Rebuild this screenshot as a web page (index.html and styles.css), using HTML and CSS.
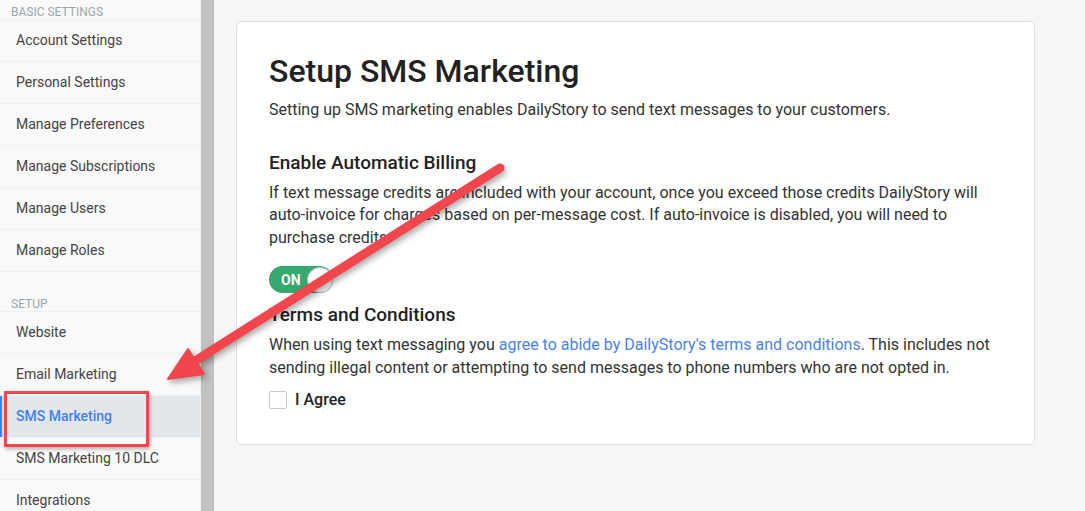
FILE: index.html
```html
<!DOCTYPE html>
<html lang="en">
<head>
<meta charset="utf-8"/>
<meta content="width=device-width, initial-scale=1.0" name="viewport"/>
<title>SMS Marketing</title>
<link rel="stylesheet" href="styles.css">
</head>
<body>
<div class="layout">
  <aside class="sidebar">
    <div class="nav-group">
      <div class="nav-header">Basic Settings</div>
      <a class="nav-item" href="#">Account Settings</a>
      <a class="nav-item" href="#">Personal Settings</a>
      <a class="nav-item" href="#">Manage Preferences</a>
      <a class="nav-item" href="#">Manage Subscriptions</a>
      <a class="nav-item" href="#">Manage Users</a>
      <a class="nav-item" href="#">Manage Roles</a>
    </div>
    <div class="nav-group">
      <div class="nav-header">Setup</div>
      <a class="nav-item" href="#">Website</a>
      <a class="nav-item" href="#">Email Marketing</a>
      <a class="nav-item active" href="#">SMS Marketing<span class="callout-box"></span></a>
      <a class="nav-item" href="#">SMS Marketing 10 DLC</a>
      <a class="nav-item" href="#">Integrations</a>
    </div>
  </aside>
  <div class="scrollbar"><div class="scrollbar-thumb"></div></div>
  <main class="content">
    <section class="card">
      <h1>Setup SMS Marketing</h1>
      <p class="lead">Setting up SMS marketing enables DailyStory to send text messages to your customers.</p>

      <h3>Enable Automatic Billing</h3>
      <p>If text message credits are included with your account, once you exceed those credits DailyStory will auto-invoice for charges based on per-message cost. If auto-invoice is disabled, you will need to purchase credits.</p>
      <div class="toggle">
        <span class="toggle-label">ON</span>
        <span class="toggle-knob"></span>
      </div>

      <h3 class="terms-title">Terms and Conditions</h3>
      <p>When using text messaging you <a href="#">agree to abide by DailyStory's terms and conditions</a>. This includes not sending illegal content or attempting to send messages to phone numbers who are not opted in.</p>
      <label class="agree">
        <span class="checkbox"></span>
        I Agree
      </label>
    </section>
  </main>
</div>

<!-- annotation arrow -->
<svg class="callout-arrow" width="1085" height="511" viewBox="0 0 1085 511">
  <g fill="#f2464d" stroke="#f2464d">
    <line x1="500" y1="168" x2="192" y2="363" stroke-width="9" stroke-linecap="round"/>
    <polygon points="168,379 188,349 204,374" stroke-width="2" stroke-linejoin="round"/>
  </g>
</svg>
</body>
</html>
```

FILE: styles.css
```css
body {
  margin: 0;
  font-family: 'Roboto', 'Liberation Sans', sans-serif;
  background: #f6f6f6;
  color: #333;
  overflow: hidden;
}

.layout {
  display: flex;
  height: 511px;
}

.sidebar {
  width: 200px;
  flex-shrink: 0;
  background: #f9f9f9;
  margin-top: -21px;
}

.nav-header {
  height: 41px;
  box-sizing: border-box;
  display: flex;
  align-items: flex-end;
  padding: 0 0 0 11px;
  line-height: 13px;
  font-size: 12px;
  text-transform: uppercase;
  color: #9ba5ad;
  border-bottom: 1px solid #edf1f5;
}

.nav-group + .nav-group .nav-header {
  height: 40px;
}

.nav-item {
  position: relative;
  display: block;
  height: 41px;
  line-height: 41px;
  padding-left: 16px;
  font-size: 14px;
  color: #444;
  text-decoration: none;
  border-bottom: 1px solid #edf1f5;
}

.nav-item.active {
  background: #e4e7ea;
  color: #3b82f0;
  font-weight: 500;
  box-shadow: inset 2px 0 0 #3b82f0;
}

.callout-box {
  position: absolute;
  left: 4px;
  top: -5px;
  width: 145px;
  height: 56px;
  box-sizing: border-box;
  border: 3px solid #f2464d;
  box-shadow: 1px 2px 4px rgba(0,0,0,0.3);
}

.scrollbar {
  width: 14px;
  flex-shrink: 0;
  background: #f1f1f1;
  display: flex;
}

.scrollbar-thumb {
  margin-left: 1px;
  flex: 1;
  background: #c1c1c1;
}

.content {
  flex: 1;
  padding: 21px 0 0 22px;
}

.card {
  width: 799px;
  box-sizing: border-box;
  background: white;
  border: 1px solid #dedede;
  border-radius: 6px;
  padding: 29px 32px 33px;
}

h1 {
  margin: 0;
  font-size: 32px;
  line-height: 40px;
  font-weight: 500;
  color: #222;
}

.lead {
  margin: 8px 0 0;
}

p {
  margin: 0;
  font-size: 16px;
  line-height: 22.5px;
}

h3 {
  margin: 29px 0 7px;
  font-size: 19px;
  line-height: 24px;
  font-weight: 500;
  color: #222;
}

h3.terms-title {
  margin-top: 10px;
}

a {
  color: #4a82ea;
  text-decoration: none;
}

.toggle {
  margin-top: 17px;
  width: 64px;
  height: 27px;
  box-sizing: border-box;
  border-radius: 14px;
  background: #36a96f;
  display: flex;
  align-items: center;
  justify-content: space-between;
  padding: 0 0 0 12px;
}

.toggle-label {
  color: white;
  font-weight: 700;
  font-size: 14px;
}

.toggle-knob {
  width: 26px;
  height: 26px;
  box-sizing: border-box;
  border-radius: 50%;
  background: white;
  border: 1px solid #c8c8c8;
}

.agree {
  margin-top: 10px;
  display: flex;
  align-items: center;
  gap: 8px;
  font-size: 16px;
  line-height: 22px;
  font-weight: 500;
  color: #222;
}

.checkbox {
  width: 18px;
  height: 18px;
  box-sizing: border-box;
  border: 1px solid #c9c9c9;
  border-radius: 2px;
  background: white;
}

.callout-arrow {
  position: absolute;
  left: 0;
  top: 0;
  pointer-events: none;
  filter: drop-shadow(2px 3px 3px rgba(0,0,0,0.35));
}
```
